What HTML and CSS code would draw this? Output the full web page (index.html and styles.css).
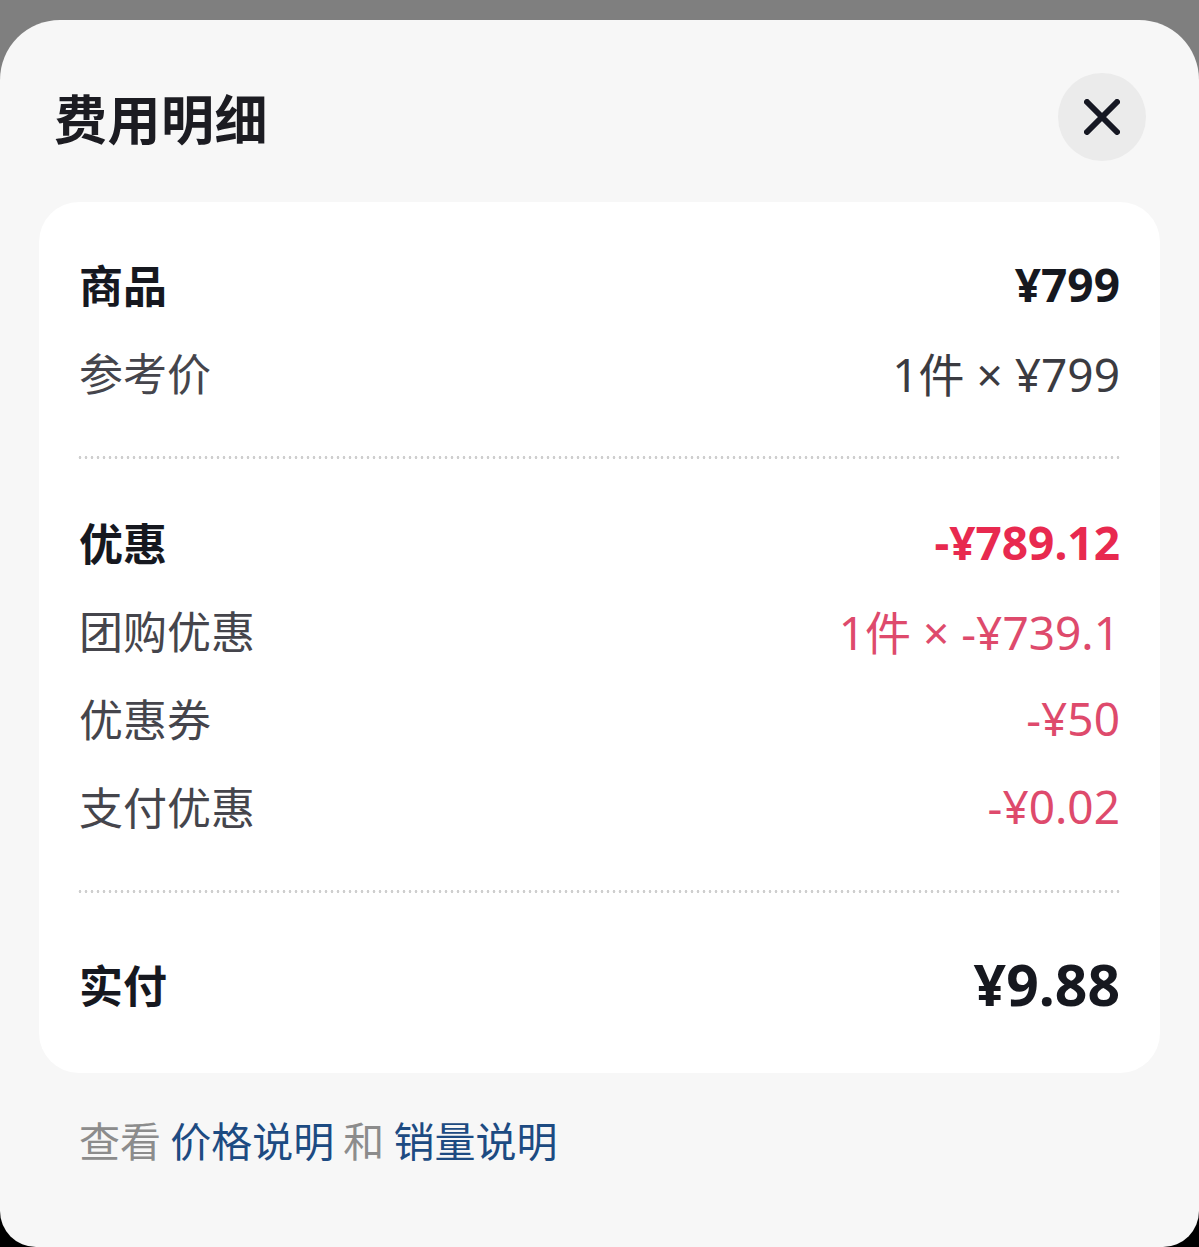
FILE: index.html
```html
<!DOCTYPE html>
<html lang="zh-CN">
<head>
<meta charset="utf-8">
<title>费用明细</title>
<link rel="stylesheet" href="styles.css">
</head>
<body>
<div class="sheet">
  <div class="header">
    <h1 class="title">费用明细</h1>
    <button class="close" aria-label="关闭">
      <svg width="36" height="36" viewBox="0 0 36 36"><path d="M3 3 L33 33 M33 3 L3 33" stroke="#161823" stroke-width="6" stroke-linecap="round" fill="none"/></svg>
    </button>
  </div>
  <div class="card">
    <div class="section">
      <div class="row head"><span class="label">商品</span><span class="value">¥799</span></div>
      <div class="row"><span class="label">参考价</span><span class="value">1件 × ¥799</span></div>
    </div>
    <div class="divider"></div>
    <div class="section">
      <div class="row head"><span class="label">优惠</span><span class="value red-strong">-¥789.12</span></div>
      <div class="row"><span class="label">团购优惠</span><span class="value red">1件 × -¥739.1</span></div>
      <div class="row"><span class="label">优惠券</span><span class="value red">-¥50</span></div>
      <div class="row"><span class="label">支付优惠</span><span class="value red">-¥0.02</span></div>
    </div>
    <div class="divider"></div>
    <div class="section">
      <div class="row head total"><span class="label">实付</span><span class="value">¥9.88</span></div>
    </div>
  </div>
  <p class="footer">查看 <a class="link">价格说明</a> 和 <a class="link">销量说明</a></p>
</div>
</body>
</html>
```

FILE: styles.css
```css
html, body {
  margin: 0;
  padding: 0;
}
body {
  background: linear-gradient(#7f7f7f 0 600px, #000 600px);
  height: 1247px;
  overflow: hidden;
  font-family: "Noto Sans CJK SC", "Noto Sans", sans-serif;
}
.sheet {
  margin-top: 20px;
  height: 1227px;
  box-sizing: border-box;
  background: #f7f7f7;
  border-radius: 60px 60px 36px 36px;
  padding-top: 53px;
}
.header {
  display: flex;
  align-items: center;
  justify-content: space-between;
  padding: 0 53px 0 54px;
  margin-bottom: 41px;
}
.title {
  margin: 0;
  font-size: 53px;
  font-weight: 700;
  color: #1c1c22;
  line-height: 1;
  letter-spacing: 0.5px;
}
.close {
  width: 88px;
  height: 88px;
  border-radius: 50%;
  border: none;
  background: #ebebeb;
  display: flex;
  align-items: center;
  justify-content: center;
  padding: 0;
}
.card {
  margin: 0 39px;
  background: #fff;
  border-radius: 40px;
  padding: 38px 40px 37px 40px;
}
.row {
  display: flex;
  justify-content: space-between;
  align-items: center;
  height: 88px;
  font-size: 44px;
  color: #45454c;
}
.row .value {
  font-family: "Noto Sans", "Noto Sans CJK SC", sans-serif;
  font-size: 46px;
  color: #3b3b41;
}
.row.head {
  font-weight: 700;
  color: #16181f;
}
.row.head .value {
  color: #16181f;
}
.row.head .value.red-strong {
  color: #e8294f;
}
.row .value.red {
  color: #de4a6c;
}
.row.total {
  height: 104px;
}
.row.total .value {
  font-size: 57px;
}
.divider {
  height: 3px;
  margin: 40px -2px 39px -2px;
  background-image: radial-gradient(circle, #cfcfcf 1.2px, transparent 1.6px);
  background-size: 6px 3px;
  background-repeat: repeat-x;
}
.footer {
  margin: 36px 0 0 79px;
  line-height: 60px;
  font-size: 41px;
  color: #8c8c8c;
}
.link {
  color: #1d4b82;
  text-decoration: none;
}
```
